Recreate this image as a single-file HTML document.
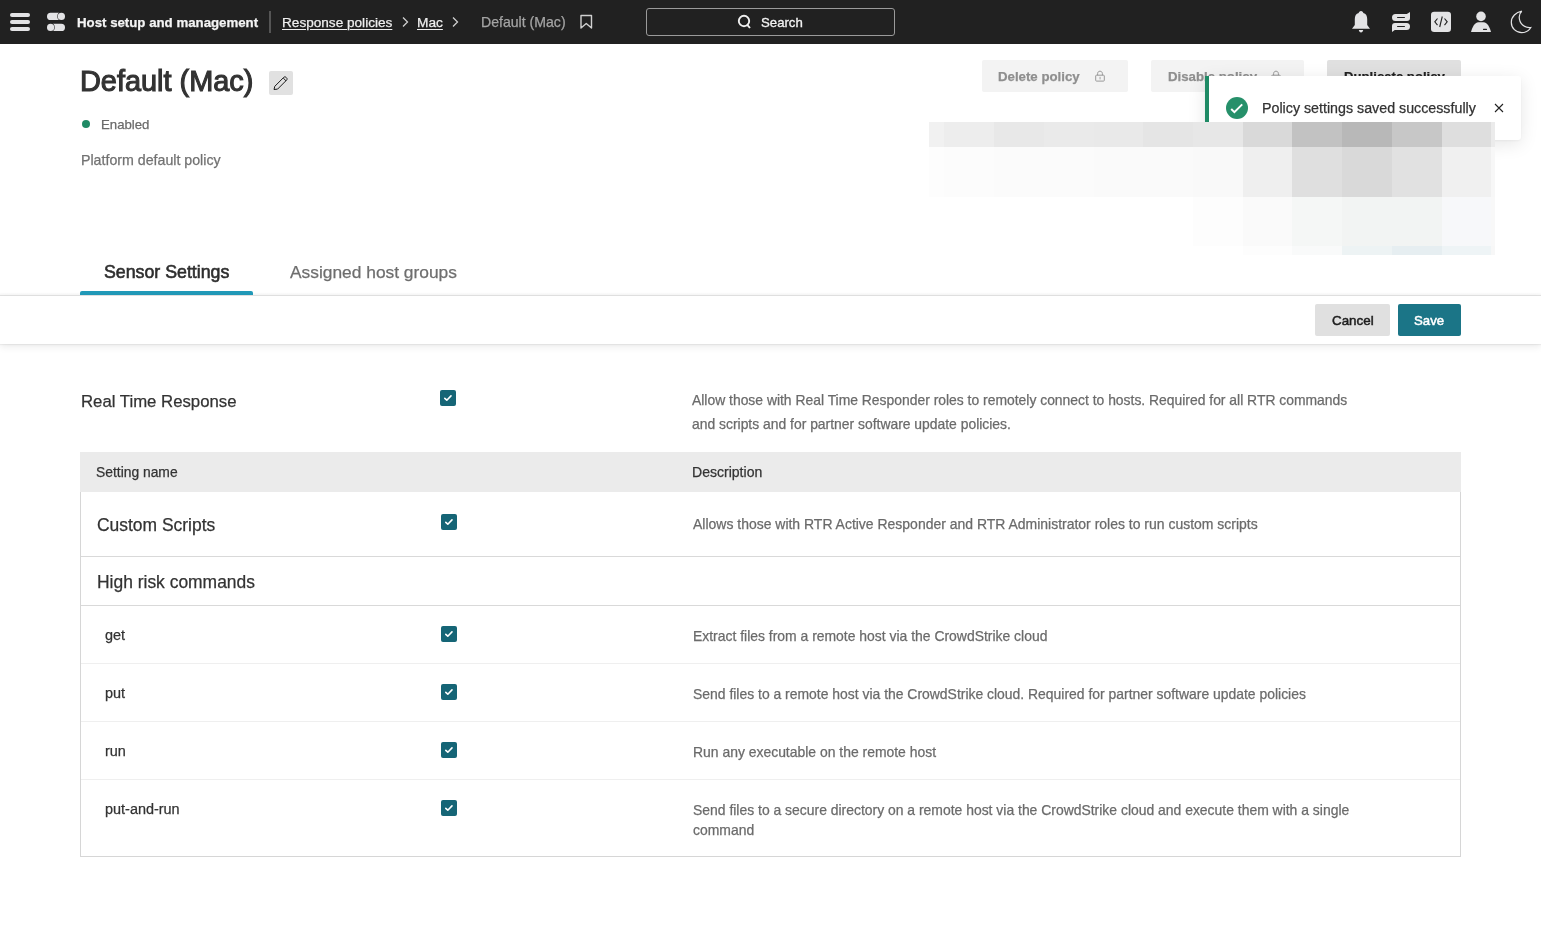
<!DOCTYPE html>
<html><head><meta charset="utf-8"><title>Default (Mac)</title>
<style>
html,body{margin:0;padding:0;width:1541px;height:934px;overflow:hidden;background:#fff;font-family:"Liberation Sans", sans-serif;}
.t{position:absolute;white-space:nowrap;will-change:transform;-webkit-text-stroke-width:0.25px;}
.r{position:absolute;}
</style></head><body>
<div class="r" style="left:0px;top:0px;width:1541px;height:44px;background:#212121;"></div>
<div class="r" style="left:10px;top:13px;width:20px;height:4px;background:#e3e3e5;border-radius:2px;"></div>
<div class="r" style="left:10px;top:20px;width:20px;height:4px;background:#e3e3e5;border-radius:2px;"></div>
<div class="r" style="left:10px;top:27px;width:20px;height:4px;background:#e3e3e5;border-radius:2px;"></div>
<svg class="r" style="left:0;top:0" width="80" height="44" viewBox="0 0 80 44">
<rect x="47" y="12.8" width="15" height="7.3" rx="3.65" fill="#e3e3e5"/>
<circle cx="61.4" cy="16.45" r="4.1" fill="#212121"/>
<circle cx="61.4" cy="16.45" r="3.6" fill="#e3e3e5"/>
<rect x="50" y="23.8" width="15" height="7.3" rx="3.65" fill="#e3e3e5"/>
<circle cx="50.6" cy="27.45" r="4.1" fill="#212121"/>
<circle cx="50.6" cy="27.45" r="3.6" fill="#e3e3e5"/>
</svg>
<div class="t" style="left:76.8px;top:15.78px;font-size:13.25px;line-height:13.25px;color:#f4f4f4;font-weight:700;">Host setup and management</div>
<div class="r" style="left:269px;top:11px;width:2px;height:22px;background:#555;"></div>
<div class="t" style="left:282px;top:15.99px;font-size:13.6px;line-height:13.6px;color:#efefef;font-weight:400;text-decoration:underline;text-underline-offset:2px;">Response policies</div>
<div class="t" style="left:417px;top:15.90px;font-size:13.7px;line-height:13.7px;color:#efefef;font-weight:400;text-decoration:underline;text-underline-offset:2px;">Mac</div>
<svg class="r" style="left:0;top:0" width="600" height="44" viewBox="0 0 600 44">
<polyline points="403,17.5 407.5,22 403,26.5" fill="none" stroke="#cfcfcf" stroke-width="1.3"/>
<polyline points="453,17.5 457.5,22 453,26.5" fill="none" stroke="#cfcfcf" stroke-width="1.3"/>
<path d="M581,15.5 H591.5 V28 L586.25,23.5 L581,28 Z" fill="none" stroke="#d0d0d0" stroke-width="1.4" stroke-linejoin="round"/>
</svg>
<div class="t" style="left:481px;top:14.76px;font-size:14.1px;line-height:14.1px;color:#a4a4a4;font-weight:400;">Default (Mac)</div>
<div class="r" style="left:646px;top:8px;width:247px;height:26px;background:transparent;border:1px solid #9a9a9a;border-radius:3px;"></div>
<svg class="r" style="left:730px;top:8px" width="30" height="28" viewBox="0 0 30 28">
<circle cx="14" cy="13" r="5.2" fill="none" stroke="#f0f0f0" stroke-width="1.9"/>
<line x1="17.3" y1="16.8" x2="20" y2="20" stroke="#f0f0f0" stroke-width="1.9"/>
</svg>
<div class="t" style="left:761px;top:15.83px;font-size:13.2px;line-height:13.2px;color:#f4f4f4;font-weight:400;-webkit-text-stroke:0.3px #f4f4f4;">Search</div>
<svg class="r" style="left:1340px;top:0" width="201" height="44" viewBox="1340 0 201 44">
<g fill="#e3e3e5">
<path d="M1361,11 C1362.3,11 1363.2,12 1363.3,13 C1366,13.6 1367.2,16 1367.2,19 L1367.2,25 L1370,28.8 L1352,28.8 L1354.8,25 L1354.8,19 C1354.8,16 1356,13.6 1358.7,13 C1358.8,12 1359.7,11 1361,11 Z"/>
<path d="M1358.8,30 L1363.2,30 C1363,31.5 1362,32.5 1361,32.5 C1360,32.5 1359,31.5 1358.8,30 Z"/>
<path d="M1392,32 L1392,26 Q1392,23 1395,23 L1406.5,23 A3.5,3.5 0 0 1 1406.5,30 L1394.8,30 Z M1397.5,26 L1404.5,26 A0.5,0.5 0 0 1 1404.5,27 L1397.5,27 A0.5,0.5 0 0 1 1397.5,26 Z" fill-rule="evenodd"/>
<path d="M1410,12 L1410,18 Q1410,21 1407,21 L1395.5,21 A3.5,3.5 0 0 1 1395.5,14 L1406.8,14 Z M1397.5,17 L1404.5,17 A0.5,0.5 0 0 1 1404.5,18 L1397.5,18 A0.5,0.5 0 0 1 1397.5,17 Z" fill-rule="evenodd"/>
<rect x="1431" y="11.7" width="20" height="20.3" rx="3.2"/>
<circle cx="1481" cy="16.4" r="4.8"/>
<path d="M1471,32 C1472,28 1474.5,22.3 1478.5,22.3 L1483.5,22.3 C1487.5,22.3 1490,28 1491,32 Z"/>
</g>
<g fill="none" stroke="#212121" stroke-width="1.1">
<polyline points="1437.5,18.5 1434.8,21.8 1437.5,25.2"/>
<polyline points="1444.5,18.5 1447.2,21.8 1444.5,25.2"/>
<line x1="1442.3" y1="16.5" x2="1439.7" y2="27"/>
</g>
<rect x="1483" y="28.8" width="4" height="1.1" rx="0.5" fill="#212121"/>
<path d="M1521.8,11.2 C1516,12.4 1511.3,16.5 1511.3,22.2 C1511.3,28.2 1516,32.6 1521.6,32.6 C1525.8,32.6 1529.2,30.3 1530.8,27.5 C1524.5,28.2 1519.2,23.7 1519.2,17 C1519.2,14.6 1520.1,12.6 1521.8,11.2 Z" fill="none" stroke="#e3e3e5" stroke-width="1.2"/>
</svg>
<div class="t" style="left:80.4px;top:67.34px;font-size:28.9px;line-height:28.9px;color:#333;font-weight:400;-webkit-text-stroke:1.1px #333;">Default (Mac)</div>
<div class="r" style="left:269px;top:71px;width:24px;height:24px;background:#e1e1e1;border-radius:2px;"></div>
<svg class="r" style="left:269px;top:71px" width="24" height="24" viewBox="0 0 24 24">
<path d="M5,18.5 L5.8,15.3 L14.8,6.3 C15.4,5.7 16.4,5.7 17,6.3 L17.6,6.9 C18.2,7.5 18.2,8.5 17.6,9.1 L8.6,18.1 Z M14.2,7 L17,9.8" fill="none" stroke="#1a1a1a" stroke-width="1" stroke-linejoin="round"/>
</svg>
<div class="r" style="left:82px;top:120px;width:8px;height:8px;background:#1f8a65;border-radius:50%;"></div>
<div class="t" style="left:100.5px;top:117.83px;font-size:13.2px;line-height:13.2px;color:#6a6a6a;font-weight:400;">Enabled</div>
<div class="t" style="left:80.5px;top:152.98px;font-size:14.2px;line-height:14.2px;color:#727272;font-weight:400;">Platform default policy</div>
<div class="r" style="left:982px;top:60px;width:146px;height:32px;background:#f3f3f3;border-radius:2px;"></div>
<div class="t" style="left:998px;top:69.54px;font-size:13.24px;line-height:13.24px;color:#8f8f8f;font-weight:700;">Delete policy</div>
<svg class="r" style="left:1094px;top:69.5px" width="12" height="13" viewBox="0 0 12 13">
<rect x="1.7" y="5.2" width="8.6" height="5.9" rx="0.8" fill="none" stroke="#999" stroke-width="1"/>
<path d="M3.6,5.2 V3.6 C3.6,2.2 4.6,1.2 6,1.2 C7.4,1.2 8.4,2.2 8.4,3.6 V5.2" fill="none" stroke="#999" stroke-width="1"/>
<rect x="5.6" y="6.8" width="0.9" height="2.6" fill="#999"/>
</svg>
<div class="r" style="left:1151px;top:60px;width:153px;height:32px;background:#f3f3f3;border-radius:2px;"></div>
<div class="t" style="left:1168px;top:69.54px;font-size:13.24px;line-height:13.24px;color:#8f8f8f;font-weight:700;">Disable policy</div>
<svg class="r" style="left:1270px;top:69.5px" width="12" height="13" viewBox="0 0 12 13">
<rect x="1.7" y="5.2" width="8.6" height="5.9" rx="0.8" fill="none" stroke="#999" stroke-width="1"/>
<path d="M3.6,5.2 V3.6 C3.6,2.2 4.6,1.2 6,1.2 C7.4,1.2 8.4,2.2 8.4,3.6 V5.2" fill="none" stroke="#999" stroke-width="1"/>
<rect x="5.6" y="6.8" width="0.9" height="2.6" fill="#999"/>
</svg>
<div class="r" style="left:1327px;top:60px;width:134px;height:32px;background:#e0e0e0;border-radius:2px;"></div>
<div class="t" style="left:1343.5px;top:69.60px;font-size:13.17px;line-height:13.17px;color:#222;font-weight:700;">Duplicate policy</div>
<div class="r" style="left:1205px;top:76px;width:316px;height:64px;background:#fff;box-shadow:0 4px 18px rgba(0,0,0,0.10), 0 1px 3px rgba(0,0,0,0.05);border-radius:3px;"></div>
<div class="r" style="left:1205px;top:76px;width:4px;height:46px;background:#1f8a65;"></div>
<svg class="r" style="left:1226px;top:97px" width="22" height="22" viewBox="0 0 22 22">
<circle cx="11" cy="11" r="11" fill="#26906a"/>
<polyline points="5.2,12 8.4,15.2 16.2,7.4" fill="none" stroke="#fff" stroke-width="2"/>
</svg>
<div class="t" style="left:1261.7px;top:101.23px;font-size:14.26px;line-height:14.26px;color:#333;font-weight:400;">Policy settings saved successfully</div>
<svg class="r" style="left:1493px;top:102px" width="12" height="12" viewBox="0 0 12 12">
<path d="M2,2 L10,10 M10,2 L2,10" stroke="#222" stroke-width="1.1"/>
</svg>
<div class="r" style="left:929px;top:122px;width:15px;height:25px;background:#f1f1f1;"></div>
<div class="r" style="left:944px;top:122px;width:50px;height:25px;background:#ededed;"></div>
<div class="r" style="left:994px;top:122px;width:50px;height:25px;background:#e8e8e8;"></div>
<div class="r" style="left:1044px;top:122px;width:50px;height:25px;background:#eaeaea;"></div>
<div class="r" style="left:1094px;top:122px;width:49px;height:25px;background:#e9e9e9;"></div>
<div class="r" style="left:1143px;top:122px;width:50px;height:25px;background:#e5e5e5;"></div>
<div class="r" style="left:1193px;top:122px;width:50px;height:25px;background:#e7e7e7;"></div>
<div class="r" style="left:1243px;top:122px;width:49px;height:25px;background:#d9d9d9;"></div>
<div class="r" style="left:1292px;top:122px;width:50px;height:25px;background:#c2c2c2;"></div>
<div class="r" style="left:1342px;top:122px;width:50px;height:25px;background:#b8b8b8;"></div>
<div class="r" style="left:1392px;top:122px;width:50px;height:25px;background:#c7c7c7;"></div>
<div class="r" style="left:1442px;top:122px;width:49px;height:25px;background:#dedede;"></div>
<div class="r" style="left:1491px;top:122px;width:4px;height:25px;background:#ebebeb;"></div>
<div class="r" style="left:929px;top:147px;width:15px;height:50px;background:#fdfdfd;"></div>
<div class="r" style="left:944px;top:147px;width:50px;height:50px;background:#fcfcfc;"></div>
<div class="r" style="left:994px;top:147px;width:50px;height:50px;background:#fbfbfb;"></div>
<div class="r" style="left:1044px;top:147px;width:50px;height:50px;background:#fbfbfb;"></div>
<div class="r" style="left:1094px;top:147px;width:49px;height:50px;background:#fafafa;"></div>
<div class="r" style="left:1143px;top:147px;width:50px;height:50px;background:#fafafa;"></div>
<div class="r" style="left:1193px;top:147px;width:50px;height:50px;background:#f9f9f9;"></div>
<div class="r" style="left:1243px;top:147px;width:49px;height:50px;background:#efefef;"></div>
<div class="r" style="left:1292px;top:147px;width:50px;height:50px;background:#dfdfdf;"></div>
<div class="r" style="left:1342px;top:147px;width:50px;height:50px;background:#d9d9d9;"></div>
<div class="r" style="left:1392px;top:147px;width:50px;height:50px;background:#e1e1e1;"></div>
<div class="r" style="left:1442px;top:147px;width:49px;height:50px;background:#f0f0f0;"></div>
<div class="r" style="left:1491px;top:147px;width:4px;height:50px;background:#f7f7f7;"></div>
<div class="r" style="left:1193px;top:197px;width:50px;height:49px;background:#fdfdfd;"></div>
<div class="r" style="left:1243px;top:197px;width:49px;height:49px;background:#fafafa;"></div>
<div class="r" style="left:1292px;top:197px;width:50px;height:49px;background:#f5f7f6;"></div>
<div class="r" style="left:1342px;top:197px;width:50px;height:49px;background:#f2f4f3;"></div>
<div class="r" style="left:1392px;top:197px;width:50px;height:49px;background:#f2f4f3;"></div>
<div class="r" style="left:1442px;top:197px;width:49px;height:49px;background:#f7f8fa;"></div>
<div class="r" style="left:1491px;top:197px;width:4px;height:49px;background:#f8f8f8;"></div>
<div class="r" style="left:1243px;top:246px;width:49px;height:9px;background:#fdfdfd;"></div>
<div class="r" style="left:1292px;top:246px;width:50px;height:9px;background:#f9fafa;"></div>
<div class="r" style="left:1342px;top:246px;width:50px;height:9px;background:#edf3f4;"></div>
<div class="r" style="left:1392px;top:246px;width:50px;height:9px;background:#e6eef1;"></div>
<div class="r" style="left:1442px;top:246px;width:49px;height:9px;background:#eef4f6;"></div>
<div class="r" style="left:1491px;top:246px;width:4px;height:9px;background:#f7f7f7;"></div>
<div class="t" style="left:103.8px;top:263.97px;font-size:17.75px;line-height:17.75px;color:#2e2e2e;font-weight:400;-webkit-text-stroke:0.6px #2e2e2e;">Sensor Settings</div>
<div class="t" style="left:289.6px;top:264.30px;font-size:17.36px;line-height:17.36px;color:#6e6e6e;font-weight:400;">Assigned host groups</div>
<div class="r" style="left:0px;top:292px;width:1541px;height:3px;background:linear-gradient(rgba(0,0,0,0), rgba(0,0,0,0.035));"></div>
<div class="r" style="left:0px;top:295px;width:1541px;height:1px;background:#e2e2e2;"></div>
<div class="r" style="left:80px;top:291px;width:173px;height:4px;background:#2199b8;border-radius:2px 2px 0 0;"></div>
<div class="r" style="left:0px;top:296px;width:1541px;height:48px;background:#fff;box-shadow:0 1px 1px rgba(0,0,0,0.05), 0 3px 7px rgba(0,0,0,0.08);"></div>
<div class="r" style="left:1315px;top:304px;width:75px;height:32px;background:#e0e0e0;border-radius:2px;"></div>
<div class="t" style="left:1331.5px;top:313.66px;font-size:13.4px;line-height:13.4px;color:#1e1e1e;font-weight:400;-webkit-text-stroke:0.5px #1e1e1e;">Cancel</div>
<div class="r" style="left:1398px;top:304px;width:63px;height:32px;background:#1b7587;border-radius:2px;"></div>
<div class="t" style="left:1414.3px;top:313.83px;font-size:13.2px;line-height:13.2px;color:#fff;font-weight:400;-webkit-text-stroke:0.5px #fff;">Save</div>
<div class="t" style="left:80.5px;top:393.82px;font-size:16.75px;line-height:16.75px;color:#333;font-weight:400;">Real Time Response</div>
<svg class="r" style="left:440px;top:390px" width="16" height="16" viewBox="0 0 16 16">
<rect width="16" height="16" rx="2" fill="#156576"/>
<polyline points="4.8,8.3 6.8,10.2 11,5.9" fill="none" stroke="#fff" stroke-width="1.6" stroke-linecap="round" stroke-linejoin="round"/>
</svg>
<div class="t" style="left:692px;top:394.23px;font-size:13.9px;line-height:13.9px;color:#6b6b6b;font-weight:400;">Allow those with Real Time Responder roles to remotely connect to hosts. Required for all RTR commands</div>
<div class="t" style="left:692px;top:418.23px;font-size:13.9px;line-height:13.9px;color:#6b6b6b;font-weight:400;">and scripts and for partner software update policies.</div>
<div class="r" style="left:80px;top:452px;width:1381px;height:40px;background:#ebebeb;"></div>
<div class="t" style="left:96px;top:466.28px;font-size:13.85px;line-height:13.85px;color:#333;font-weight:400;">Setting name</div>
<div class="t" style="left:692px;top:465.31px;font-size:14.05px;line-height:14.05px;color:#333;font-weight:400;">Description</div>
<div class="r" style="left:80px;top:492px;width:1px;height:365px;background:#d6d6d6;"></div>
<div class="r" style="left:1460px;top:492px;width:1px;height:365px;background:#d6d6d6;"></div>
<div class="r" style="left:80px;top:856px;width:1381px;height:1px;background:#d6d6d6;"></div>
<div class="r" style="left:81px;top:556px;width:1379px;height:1px;background:#d9d9d9;"></div>
<div class="r" style="left:81px;top:605px;width:1379px;height:1px;background:#d9d9d9;"></div>
<div class="r" style="left:81px;top:663px;width:1379px;height:1px;background:#efefef;"></div>
<div class="r" style="left:81px;top:721px;width:1379px;height:1px;background:#efefef;"></div>
<div class="r" style="left:81px;top:779px;width:1379px;height:1px;background:#efefef;"></div>
<div class="t" style="left:97px;top:517.33px;font-size:17.45px;line-height:17.45px;color:#333;font-weight:400;">Custom Scripts</div>
<svg class="r" style="left:441px;top:514px" width="16" height="16" viewBox="0 0 16 16">
<rect width="16" height="16" rx="2" fill="#156576"/>
<polyline points="4.8,8.3 6.8,10.2 11,5.9" fill="none" stroke="#fff" stroke-width="1.6" stroke-linecap="round" stroke-linejoin="round"/>
</svg>
<div class="t" style="left:693.4px;top:517.07px;font-size:13.98px;line-height:13.98px;color:#6b6b6b;font-weight:400;">Allows those with RTR Active Responder and RTR Administrator roles to run custom scripts</div>
<div class="t" style="left:97px;top:573.73px;font-size:17.45px;line-height:17.45px;color:#333;font-weight:400;">High risk commands</div>
<div class="t" style="left:105.3px;top:627.87px;font-size:14.45px;line-height:14.45px;color:#333;font-weight:400;">get</div>
<svg class="r" style="left:441px;top:626px" width="16" height="16" viewBox="0 0 16 16">
<rect width="16" height="16" rx="2" fill="#156576"/>
<polyline points="4.8,8.3 6.8,10.2 11,5.9" fill="none" stroke="#fff" stroke-width="1.6" stroke-linecap="round" stroke-linejoin="round"/>
</svg>
<div class="t" style="left:693px;top:629.81px;font-size:13.93px;line-height:13.93px;color:#6b6b6b;font-weight:400;">Extract files from a remote host via the CrowdStrike cloud</div>
<div class="t" style="left:105.3px;top:685.97px;font-size:14.45px;line-height:14.45px;color:#333;font-weight:400;">put</div>
<svg class="r" style="left:441px;top:684px" width="16" height="16" viewBox="0 0 16 16">
<rect width="16" height="16" rx="2" fill="#156576"/>
<polyline points="4.8,8.3 6.8,10.2 11,5.9" fill="none" stroke="#fff" stroke-width="1.6" stroke-linecap="round" stroke-linejoin="round"/>
</svg>
<div class="t" style="left:693px;top:687.91px;font-size:13.93px;line-height:13.93px;color:#6b6b6b;font-weight:400;">Send files to a remote host via the CrowdStrike cloud. Required for partner software update policies</div>
<div class="t" style="left:105.3px;top:743.57px;font-size:14.45px;line-height:14.45px;color:#333;font-weight:400;">run</div>
<svg class="r" style="left:441px;top:742px" width="16" height="16" viewBox="0 0 16 16">
<rect width="16" height="16" rx="2" fill="#156576"/>
<polyline points="4.8,8.3 6.8,10.2 11,5.9" fill="none" stroke="#fff" stroke-width="1.6" stroke-linecap="round" stroke-linejoin="round"/>
</svg>
<div class="t" style="left:693px;top:745.51px;font-size:13.93px;line-height:13.93px;color:#6b6b6b;font-weight:400;">Run any executable on the remote host</div>
<div class="t" style="left:105.3px;top:801.97px;font-size:14.45px;line-height:14.45px;color:#333;font-weight:400;">put-and-run</div>
<svg class="r" style="left:441px;top:800px" width="16" height="16" viewBox="0 0 16 16">
<rect width="16" height="16" rx="2" fill="#156576"/>
<polyline points="4.8,8.3 6.8,10.2 11,5.9" fill="none" stroke="#fff" stroke-width="1.6" stroke-linecap="round" stroke-linejoin="round"/>
</svg>
<div class="t" style="left:693px;top:803.91px;font-size:13.93px;line-height:13.93px;color:#6b6b6b;font-weight:400;">Send files to a secure directory on a remote host via the CrowdStrike cloud and execute them with a single</div>
<div class="t" style="left:693px;top:824.31px;font-size:13.93px;line-height:13.93px;color:#6b6b6b;font-weight:400;">command</div>
</body></html>
